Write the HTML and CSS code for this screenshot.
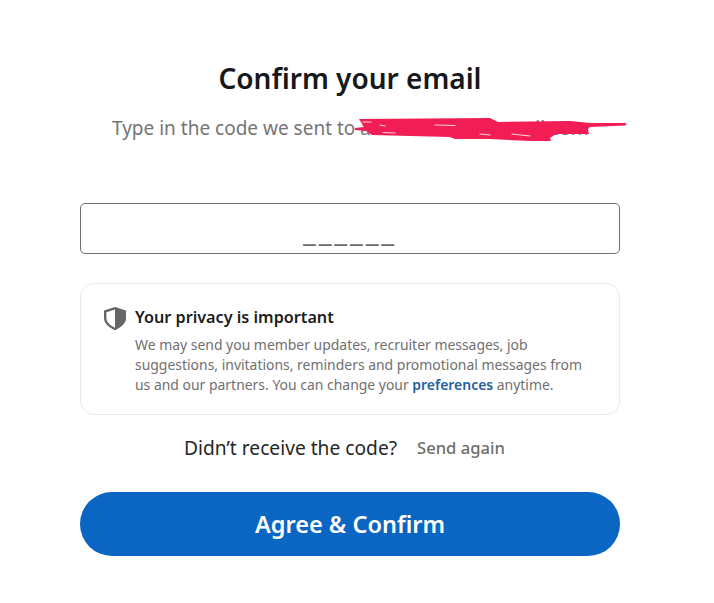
FILE: index.html
```html
<!DOCTYPE html>
<html lang="en">
<head>
<meta charset="utf-8">
<title>Confirm your email</title>
<link rel="stylesheet" href="styles.css">
</head>
<body>
<main class="page">
  <h1 class="title">Confirm your email</h1>
  <div class="subtitle-row">
    <p class="subtitle">Type in the code we sent to a•••••••••••••••••••••••il.com</p>
    <svg class="scribble" viewBox="355 112 280 36" width="280" height="36" aria-hidden="true">
      <path class="scribble-fill" d="M359 119 L490 118 L498 122 L570 121 L590 123 L625 123 Q628 124 625 125.5 L590 127 L588 129 L589 134 L556 134 L550 138 L551 141 L530 141 L490 139 L455 139 L450 137 L410 136 L372 135 L366 131 L355 130 L355 128 L364 127 Z"/>
      <path class="scribble-gap" d="M363 122 L371 122 M380 125 L385 126 M383 132.500 L395 133 M435 125 L455 125.500 M480 134 L490 135 M512 134 L530 136"/>
    </svg>
  </div>
  <div class="code-input"><span class="code-mask">______</span></div>
  <section class="notice">
    <svg class="shield" viewBox="0 0 24 24" width="24" height="24" aria-hidden="true">
      <path class="shield-body" fill-rule="evenodd" d="M12 1 L23 4.600 V12 C23 17.600 18 21 12 24.500 C6 21 1 17.600 1 12 V4.600 Z M12 3.600 L3.400 6.200 V12 C3.400 16.300 7.200 19.200 12 21.800 Z"/>
    </svg>
    <div class="notice-body">
      <h2 class="notice-title">Your privacy is important</h2>
      <p class="notice-text">We may send you member updates, recruiter messages, job suggestions, invitations, reminders and promotional messages from us and our partners. You can change your <a class="notice-link" href="#">preferences</a> anytime.</p>
    </div>
  </section>
  <div class="resend">
    <span class="resend-label">Didn’t receive the code?</span>
    <a class="resend-link" href="#">Send again</a>
  </div>
  <button class="submit" type="button">Agree &amp; Confirm</button>
</main>
</body>
</html>
```
FILE: styles.css
```css
* { box-sizing: border-box; }
html, body { margin: 0; padding: 0; background: #fff; }
body { font-family: "Noto Sans", "Open Sans", "Liberation Sans", sans-serif; color: #1a1a1a; }
.page { width: 540px; margin: 0 0 0 80px; padding-top: 59px; display: flex; flex-direction: column; }
.title { margin: 0; font-size: 28px; line-height: 38px; font-weight: 600; text-align: center; color: #16181a; }
.subtitle-row { position: relative; margin-top: 19px; height: 24px; }
.subtitle { margin: 0; padding-left: 32px; font-size: 19px; line-height: 24px; color: #757575; white-space: nowrap; }
.scribble { position: absolute; left: 275px; top: -4px; }
.scribble-fill { fill: #f21d55; }
.scribble-gap { fill: none; stroke: #fbd5df; stroke-width: 1.200; stroke-linecap: round; }
.code-input { margin-top: 63px; height: 51px; padding-bottom: 14px; border: 1.500px solid #6e6e6e; border-radius: 5px; display: flex; justify-content: center; align-items: flex-end; }
.code-mask { font-size: 29px; line-height: 18px; letter-spacing: 2.800px; color: #6a6a6a; }
.notice { margin-top: 29px; height: 132px; padding: 21px 20px 0 22px; border: 1px solid #ebebeb; border-radius: 14px; display: flex; gap: 8px; }
.shield { flex: none; margin-top: 1px; }
.shield-body { fill: #666; }
.notice-body { min-width: 0; }
.notice-title { margin: 0; font-size: 16.200px; line-height: 24px; font-weight: 600; color: #1c1c1c; }
.notice-text { margin: 6px 0 0; font-size: 13.950px; line-height: 20px; color: #707070; }
.notice-link { color: #23609f; font-weight: 600; text-decoration: none; }
.resend { margin-top: 18px; height: 28px; display: flex; justify-content: center; align-items: center; gap: 20px; }
.resend-label { font-size: 19.200px; color: #262626; }
.resend-link { padding-right: 11px; font-size: 16.600px; font-weight: 500; color: #6f6f6a; text-decoration: none; }
.submit { margin-top: 31px; height: 64px; border: 0; border-radius: 32px; background: #0a66c2; color: #fff; font: 600 23.500px "Noto Sans", "Open Sans", sans-serif; }
```
